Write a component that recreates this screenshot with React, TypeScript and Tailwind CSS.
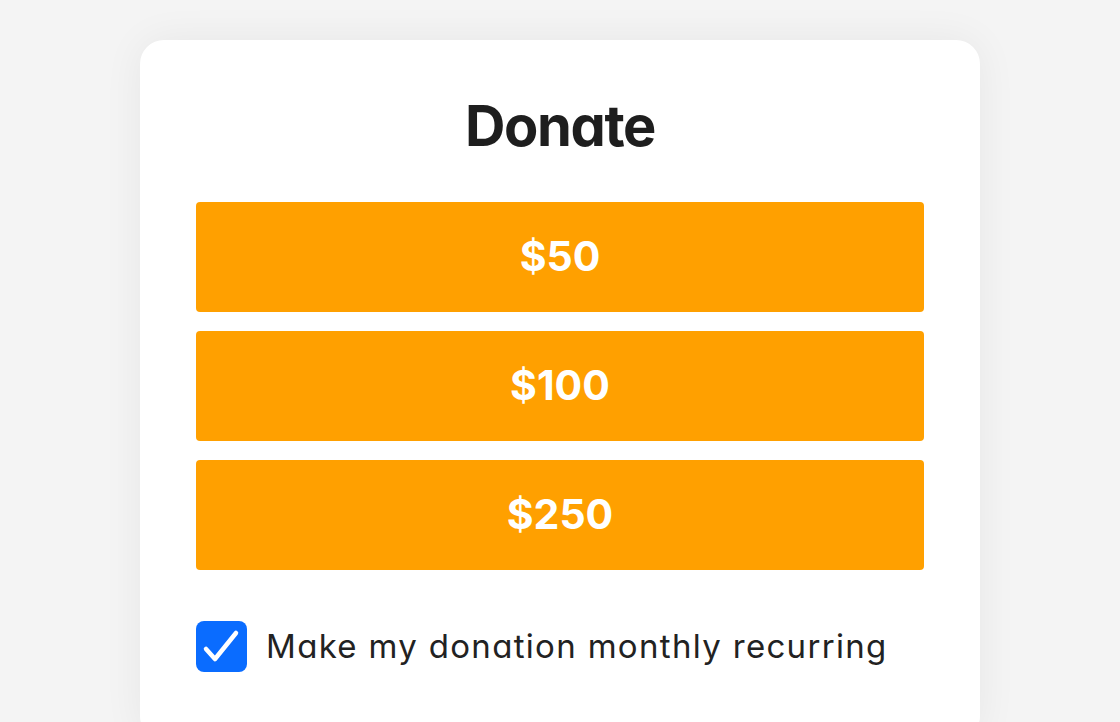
export default function App() {
  const amounts = ["$50", "$100", "$250"];

  return (
    <div className="h-screen overflow-hidden bg-[#f4f4f4] pt-[40px] font-['Inter',sans-serif] [font-feature-settings:'cv11']">
      <div className="mx-auto h-[700px] w-[840px] rounded-[24px] bg-white px-[56px] pt-[58px] shadow-[0_0_40px_rgba(0,0,0,0.06)]">
        <h1 className="mb-[48px] text-center text-[56px] font-bold leading-none tracking-[-0.025em] text-[#1e1e1e]">
          Donate
        </h1>

        <div className="flex flex-col gap-[19px]">
          {amounts.map((amount) => (
            <button
              key={amount}
              className="flex h-[110px] w-full items-center justify-center rounded-[4px] bg-[#ffa000] text-[41px] font-bold text-white"
            >
              {amount}
            </button>
          ))}
        </div>

        <label className="mt-[51px] flex items-center gap-[19px]">
          <span className="flex h-[51px] w-[51px] shrink-0 items-center justify-center rounded-[8px] bg-[#0a6cff]">
            <svg width="51" height="51" viewBox="0 0 51 51" fill="none">
              <polyline
                points="10,28 19,38 40,12"
                stroke="white"
                strokeWidth="4.5"
                strokeLinecap="round"
                strokeLinejoin="round"
              />
            </svg>
          </span>
          <span className="text-[33px] tracking-[0.04em] text-[#222222]">Make my donation monthly recurring</span>
        </label>
      </div>
    </div>
  );
}
